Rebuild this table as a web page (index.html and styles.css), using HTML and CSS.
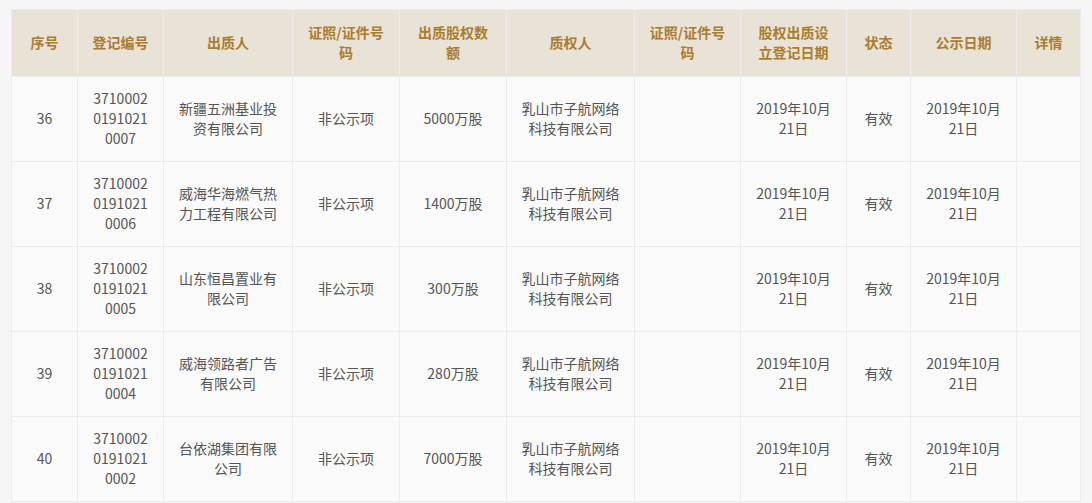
FILE: index.html
```html
<!DOCTYPE html>
<html lang="zh">
<head>
<meta charset="utf-8">
<link rel="stylesheet" href="styles.css">
</head>
<body>
<table class="pledge-table">
  <colgroup>
    <col class="c-no"><col class="c-reg"><col class="c-pledgor"><col class="c-cert"><col class="c-amt"><col class="c-pledgee"><col class="c-cert2"><col class="c-date"><col class="c-status"><col class="c-pub"><col class="c-detail">
  </colgroup>
  <thead>
    <tr>
      <th>序号</th><th>登记编号</th><th>出质人</th><th>证照/证件号码</th><th>出质股权数额</th><th>质权人</th><th>证照/证件号码</th><th>股权出质设立登记日期</th><th>状态</th><th>公示日期</th><th>详情</th>
    </tr>
  </thead>
  <tbody>
    <tr><td>36</td><td>371000201910210007</td><td>新疆五洲基业投资有限公司</td><td>非公示项</td><td>5000万股</td><td>乳山市子航网络科技有限公司</td><td></td><td>2019年10月21日</td><td>有效</td><td>2019年10月21日</td><td></td></tr>
    <tr><td>37</td><td>371000201910210006</td><td>威海华海燃气热力工程有限公司</td><td>非公示项</td><td>1400万股</td><td>乳山市子航网络科技有限公司</td><td></td><td>2019年10月21日</td><td>有效</td><td>2019年10月21日</td><td></td></tr>
    <tr><td>38</td><td>371000201910210005</td><td>山东恒昌置业有限公司</td><td>非公示项</td><td>300万股</td><td>乳山市子航网络科技有限公司</td><td></td><td>2019年10月21日</td><td>有效</td><td>2019年10月21日</td><td></td></tr>
    <tr><td>39</td><td>371000201910210004</td><td>威海领路者广告有限公司</td><td>非公示项</td><td>280万股</td><td>乳山市子航网络科技有限公司</td><td></td><td>2019年10月21日</td><td>有效</td><td>2019年10月21日</td><td></td></tr>
    <tr><td>40</td><td>371000201910210002</td><td>台依湖集团有限公司</td><td>非公示项</td><td>7000万股</td><td>乳山市子航网络科技有限公司</td><td></td><td>2019年10月21日</td><td>有效</td><td>2019年10月21日</td><td></td></tr>
  </tbody>
</table>
</body>
</html>
```
FILE: styles.css
```css
html, body {
  margin: 0;
  background: #f6f6f6;
}
body {
  padding: 9px 0 0 11px;
  font-family: "Microsoft YaHei", "Noto Sans CJK SC", "Noto Sans", sans-serif;
  font-size: 14px;
  line-height: 20px;
  color: #555;
}
.pledge-table {
  border-collapse: collapse;
  table-layout: fixed;
  width: 1070px;
  background: #fafafa;
}
.pledge-table th,
.pledge-table td {
  border: 1px solid #ececec;
  text-align: center;
  vertical-align: middle;
  padding: 0 12px 2px;
  word-break: break-all;
}
.pledge-table th {
  background: #e9e2d6;
  color: #a97c2f;
  font-weight: bold;
  height: 64px;
}
.pledge-table td {
  height: 82px;
}
.c-no { width: 66px; }
.c-reg { width: 86px; }
.c-pledgor { width: 129px; }
.c-cert { width: 107px; }
.c-amt { width: 107px; }
.c-pledgee { width: 128px; }
.c-cert2 { width: 106px; }
.c-date { width: 106px; }
.c-status { width: 64px; }
.c-pub { width: 106px; }
.c-detail { width: 64px; }
```
